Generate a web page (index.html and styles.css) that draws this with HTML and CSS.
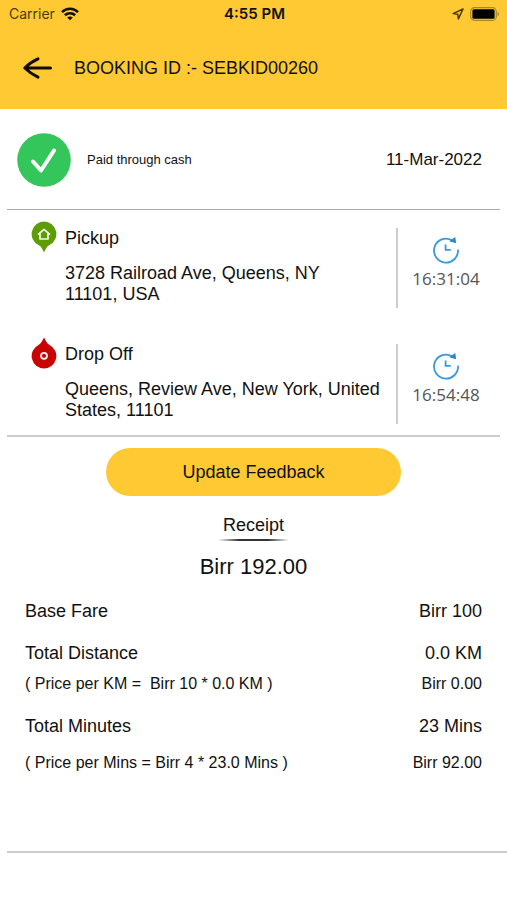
FILE: index.html
```html
<!DOCTYPE html>
<html lang="en">
<head>
<meta charset="utf-8">
<meta name="viewport" content="width=device-width, initial-scale=1">
<title>Booking receipt</title>
<link rel="stylesheet" href="styles.css">
</head>
<body>
<header class="top">
  <div class="status">
    <div class="carrier">
      <span>Carrier</span>
      <svg width="18" height="14" viewBox="0 0 18 14" fill="none" stroke="#141005" stroke-width="2.6" aria-hidden="true">
        <path d="M1 5.2C5.4.6 12.6.6 17 5.2"/>
        <path d="M3.9 8.3c2.900-2.800 7.300-2.800 10.200 0"/>
        <path d="M9 13.200 6.200 10.500c1.500-1.500 4.100-1.500 5.600 0Z" fill="#141005" stroke="none"/>
      </svg>
    </div>
    <span class="clock">4:55 PM</span>
    <div class="indicators">
      <svg width="12" height="12" viewBox="0 0 12 12" fill="none" stroke="#4a3a0c" stroke-width="1.5" stroke-linejoin="round" aria-hidden="true">
        <path d="M11 1 1.200 5.600l4.600.7.6 4.600Z"/>
      </svg>
      <svg width="30" height="14" viewBox="0 0 30 14" aria-hidden="true">
        <rect x=".7" y=".7" width="25.600" height="12.600" rx="3.800" fill="none" stroke="#a88725" stroke-width="1.200"/>
        <rect x="2.400" y="2.300" width="22.200" height="9.400" rx="1.500" fill="#000"/>
        <path d="M27.600 4.800c2 .8 2 3.600 0 4.400Z" fill="#a88725"/>
      </svg>
    </div>
  </div>
  <div class="bar">
    <button class="back" type="button" aria-label="Back">
      <svg width="30" height="24" viewBox="0 0 30 24" fill="none" stroke="#100c02" stroke-width="3" stroke-linecap="round" stroke-linejoin="round" aria-hidden="true">
        <path d="M28.500 12H3M16 2.800C11 5 6.500 8 2.800 12c3.700 3.600 8.200 6.800 13.200 9.200"/>
      </svg>
    </button>
    <h1 class="title">BOOKING ID :- SEBKID00260</h1>
  </div>
</header>
<main>
  <section class="payment">
    <svg width="54" height="54" viewBox="0 0 54 54" aria-hidden="true">
      <circle cx="27" cy="27" r="26.800" fill="#34c65a"/>
      <path d="m16 28.500 8 9L37 17.500" fill="none" stroke="#fff" stroke-width="4" stroke-linecap="round" stroke-linejoin="round"/>
    </svg>
    <span class="method">Paid through cash</span>
    <time class="date" datetime="2022-03-11">11-Mar-2022</time>
  </section>
  <section class="trips">
    <article class="trip">
      <svg class="pin" width="26" height="32" viewBox="0 0 26 32" aria-hidden="true">
        <path d="M13 .6a12.400 12.400 0 0 1 5.500 23.500C15.500 25.600 14.800 28 13 31.400 11.200 28 10.500 25.600 7.500 24.100A12.400 12.400 0 0 1 13 .6Z" fill="#5d9c02"/>
        <path d="M7.500 13.200 13 8.300l5.500 4.900M9 12.500V18h8v-5.500" fill="none" stroke="#f4f9e8" stroke-width="1.700" stroke-linecap="round" stroke-linejoin="round"/>
      </svg>
      <div class="place">
        <h2 class="label">Pickup</h2>
        <p class="address">3728 Railroad Ave, Queens, NY<br>11101, USA</p>
      </div>
      <div class="when">
        <svg width="28" height="28" viewBox="0 0 28 28" fill="none" stroke="#389add" stroke-width="1.800" aria-hidden="true">
          <path d="M20 4.200A12 12 0 1 0 26 13.600M13.600 8.500v5.400h5.200"/>
          <path d="m18.600 5 4.200-3 .6 4.400Z" fill="#2788d2" stroke="#2788d2" stroke-width="1.200"/>
        </svg>
        <time>16:31:04</time>
      </div>
    </article>
    <article class="trip">
      <svg class="pin" width="26" height="32" viewBox="0 0 26 32" aria-hidden="true">
        <path d="M13 31.400A12.400 12.400 0 0 0 18.500 7.900C15.500 6.400 14.800 4 13 .6 11.200 4 10.500 6.400 7.500 7.900A12.400 12.400 0 0 0 13 31.400Z" fill="#c90202"/>
        <circle cx="13" cy="18.800" r="3" fill="none" stroke="#fff1f1" stroke-width="1.800"/>
      </svg>
      <div class="place">
        <h2 class="label">Drop Off</h2>
        <p class="address">Queens, Review Ave, New York, United States, 11101</p>
      </div>
      <div class="when">
        <svg width="28" height="28" viewBox="0 0 28 28" fill="none" stroke="#389add" stroke-width="1.800" aria-hidden="true">
          <path d="M20 4.200A12 12 0 1 0 26 13.600M13.600 8.500v5.400h5.200"/>
          <path d="m18.600 5 4.200-3 .6 4.400Z" fill="#2788d2" stroke="#2788d2" stroke-width="1.200"/>
        </svg>
        <time>16:54:48</time>
      </div>
    </article>
  </section>
  <section class="receipt">
    <button class="feedback" type="button">Update Feedback</button>
    <h2 class="heading">Receipt</h2>
    <p class="total">Birr 192.00</p>
    <table class="fares">
      <tbody>
        <tr class="item"><th scope="row">Base Fare</th><td>Birr 100</td></tr>
        <tr class="item"><th scope="row">Total Distance</th><td>0.0 KM</td></tr>
        <tr class="detail near"><th scope="row">( Price per KM =&nbsp; Birr 10 * 0.0 KM )</th><td>Birr 0.00</td></tr>
        <tr class="item"><th scope="row">Total Minutes</th><td>23 Mins</td></tr>
        <tr class="detail"><th scope="row">( Price per Mins = Birr 4 * 23.0 Mins )</th><td>Birr 92.00</td></tr>
      </tbody>
    </table>
  </section>
</main>
</body>
</html>
```
FILE: styles.css
```css
* {
  box-sizing: border-box;
}

body {
  margin: 0;
  background: #fff;
  color: #111;
  font-family: "Liberation Sans", Arial, sans-serif;
  font-size: 18px;
  line-height: 22px;
}

h1, h2, p {
  margin: 0;
  font-size: inherit;
  font-weight: 400;
}

button {
  border: 0;
  color: inherit;
  font: inherit;
  cursor: pointer;
}

svg {
  display: block;
  flex: none;
}

.top {
  background: #ffc934;
}

.status {
  display: grid;
  grid-template-columns: 1fr auto 1fr;
  align-items: center;
  height: 28px;
  padding: 0 7px 0 9px;
  font-family: Inter, "Liberation Sans", sans-serif;
  font-size: 14px;
}

.carrier, .indicators {
  display: flex;
  align-items: center;
  gap: 6px;
}

.carrier {
  color: #4a3a0c;
}

.indicators {
  justify-content: flex-end;
}

.clock {
  font-size: 15px;
  font-weight: 600;
}

.bar {
  display: flex;
  align-items: center;
  gap: 22px;
  padding: 28px 24px 29px 22px;
}

.back {
  padding: 0;
  background: none;
}

.title {
  line-height: 24px;
}

.payment {
  display: flex;
  align-items: center;
  gap: 16px;
  margin: 0 7px;
  padding: 24px 18px 22px 10px;
  border-bottom: 1px solid #aaa;
}

.method {
  font-size: 13px;
}

.date {
  margin-left: auto;
  font-size: 17px;
}

.trips {
  display: grid;
  gap: 36px;
  margin: 0 7px;
  padding: 18px 0 11px 24px;
  border-bottom: 2px solid #ccc;
}

.trip {
  display: flex;
  min-height: 80px;
}

.pin {
  margin-top: -7px;
}

.place {
  flex: 1;
  padding-left: 8px;
}

.label {
  line-height: 20px;
}

.address {
  margin-top: 15px;
  line-height: 21px;
}

.when {
  display: flex;
  flex-direction: column;
  align-items: center;
  width: 104px;
  padding: 8px 6px 0 0;
  border-left: 2px solid #ccc;
  color: #555;
  font-family: "Open Sans", sans-serif;
  font-size: 17px;
  line-height: 30px;
}

.receipt {
  display: flex;
  flex-direction: column;
  align-items: center;
  margin-left: 7px;
  padding: 11px 0 77px;
  border-bottom: 2px solid #ccc;
}

.feedback {
  width: 59%;
  height: 48px;
  margin-right: 7px;
  border-radius: 24px;
  background: #ffc934;
}

.heading {
  margin: 18px 0 0;
  padding: 0 4px 3px;
  border-bottom: 2px solid;
  border-image: linear-gradient(90deg, transparent, #333 30%, #333 70%, transparent) 1;
}

.heading, .total {
  margin-right: 7px;
}

.total {
  margin-top: 13px;
  font-size: 22px;
  line-height: 26px;
}

.fares {
  width: 100%;
  border-collapse: collapse;
}

.fares th, .fares td {
  padding: 20px 0 0 18px;
  font-weight: 400;
  text-align: left;
}

.fares td {
  padding-right: 25px;
  text-align: right;
}

.fares .detail th, .fares .detail td {
  padding-top: 15px;
  font-size: 16px;
}

.fares .near th, .fares .near td {
  padding-top: 9px;
}
```
